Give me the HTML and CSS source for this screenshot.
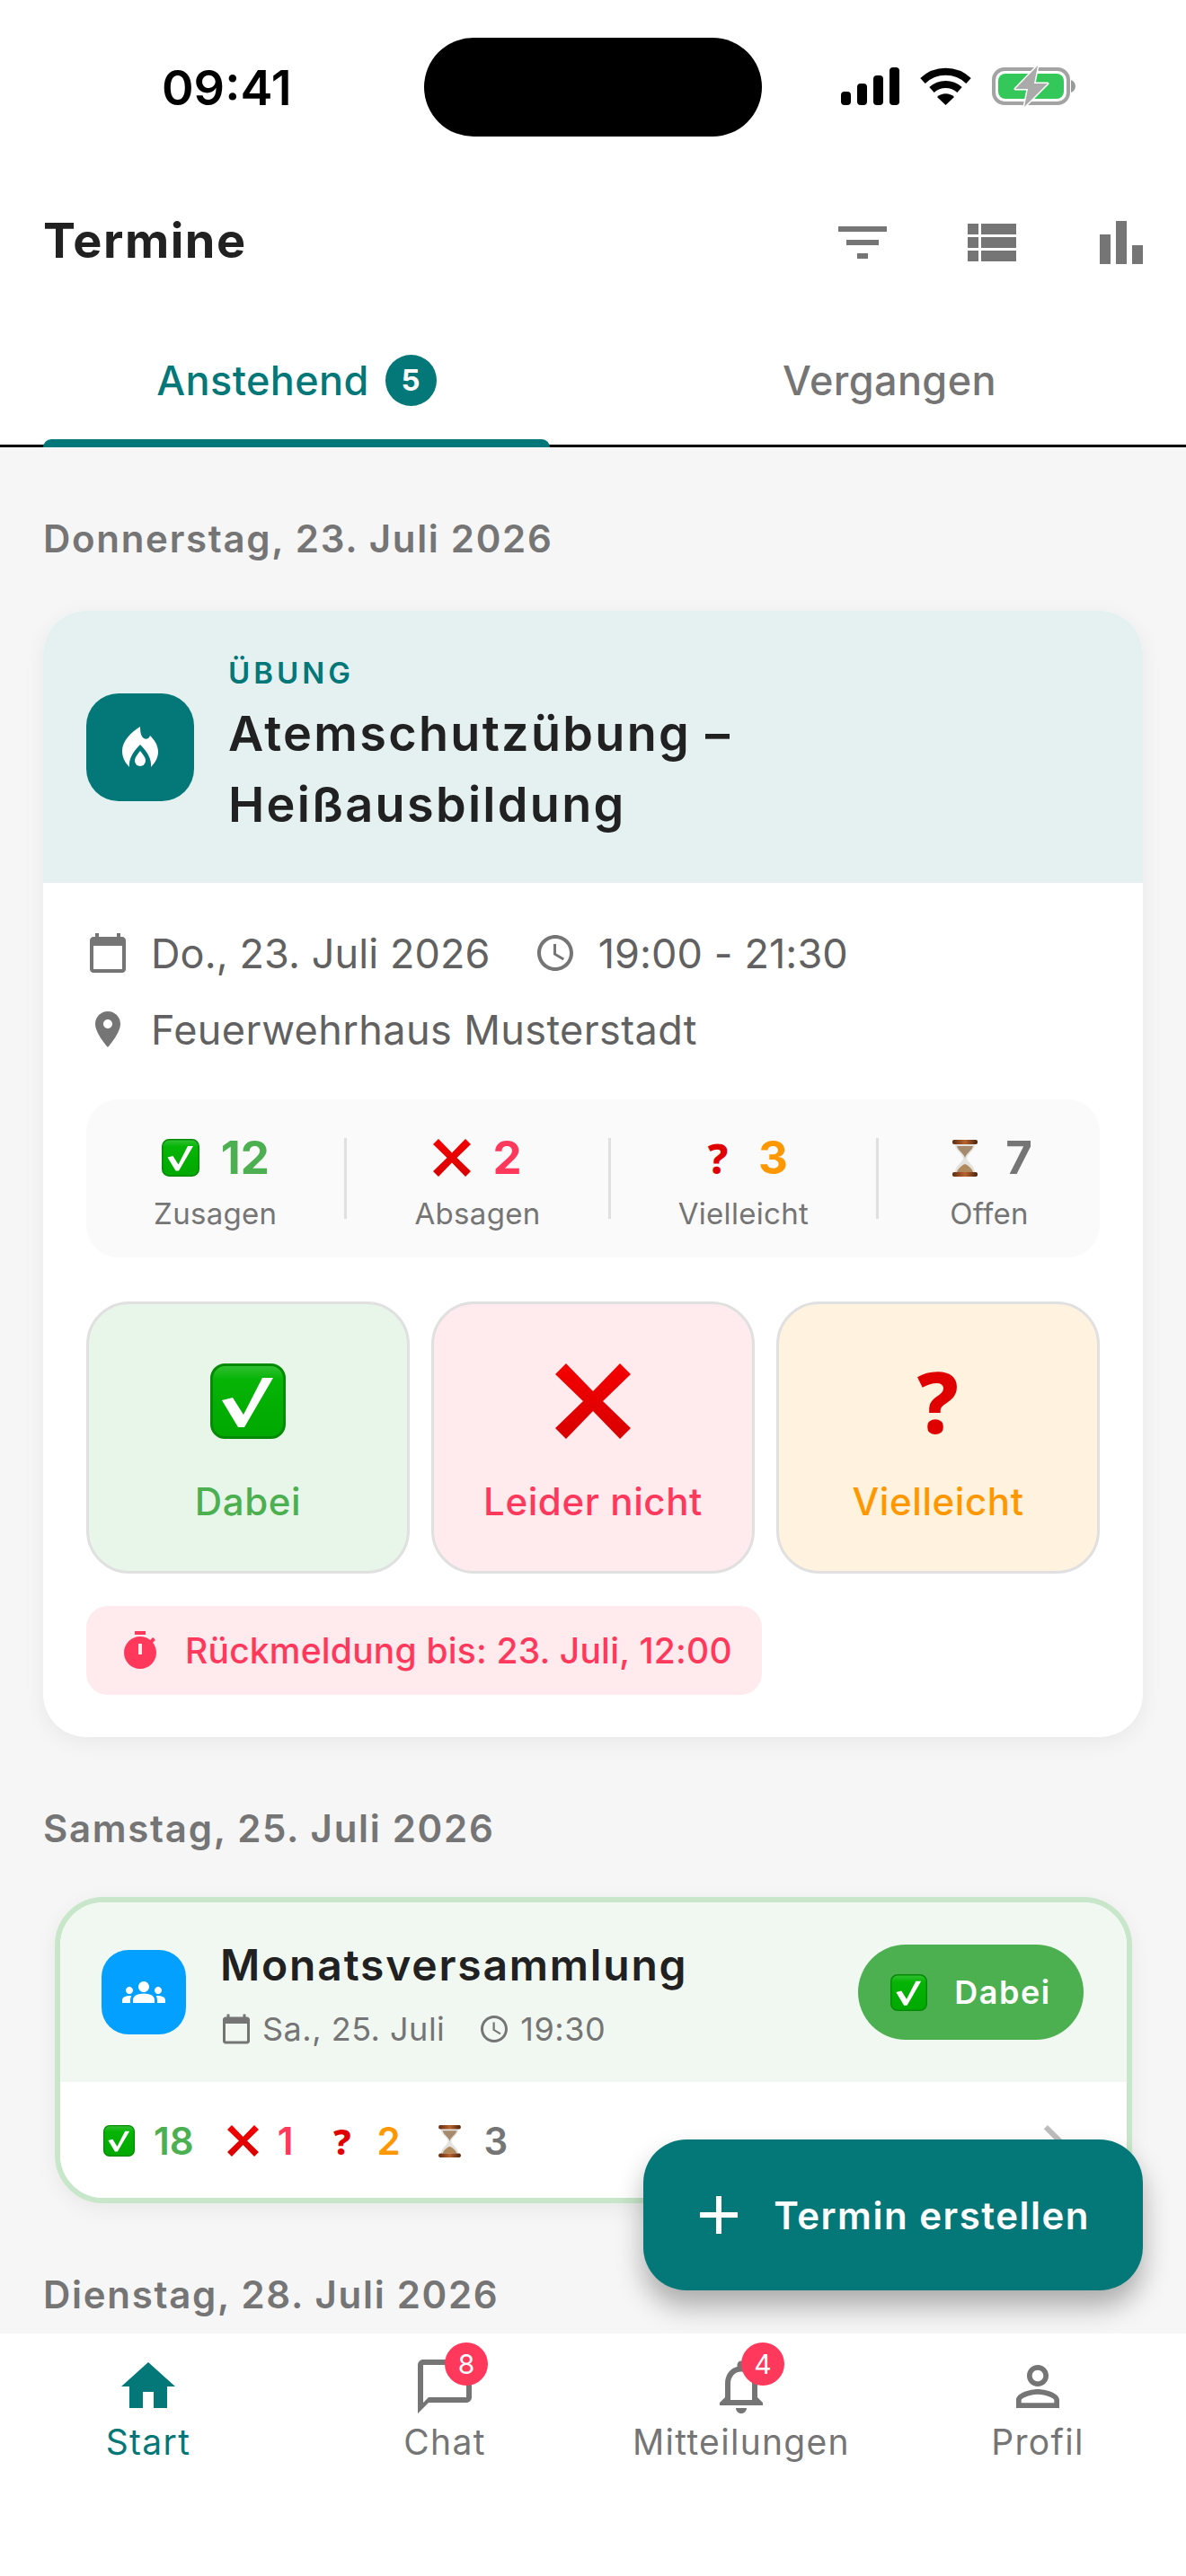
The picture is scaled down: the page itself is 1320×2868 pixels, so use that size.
FILE: index.html
```html
<!DOCTYPE html>
<html lang="de">

<head>
    <meta charset="UTF-8">
    <meta name="viewport" content="width=device-width, initial-scale=1.0">
    <title>Termine</title>
    <link rel="stylesheet" href="styles.css">
</head>

<body>

    <!-- emoji and shared icons -->
    <svg class="defs" aria-hidden="true">
        <defs>
            <linearGradient id="checkFill" x1="0" y1="0" x2="0" y2="1">
                <stop offset="0" stop-color="#35c035" />
                <stop offset="0.2" stop-color="#06b406" />
                <stop offset="1" stop-color="#00a800" />
            </linearGradient>
            <linearGradient id="crossFill" x1="0" y1="0" x2="0" y2="1">
                <stop offset="0" stop-color="#f50000" />
                <stop offset="1" stop-color="#d80000" />
            </linearGradient>
            <linearGradient id="woodFill" x1="0" y1="0" x2="1" y2="0">
                <stop offset="0" stop-color="#5e2c12" />
                <stop offset="0.5" stop-color="#b9642e" />
                <stop offset="1" stop-color="#4c220d" />
            </linearGradient>
        </defs>
        <symbol id="e-check" viewBox="0 0 84 84">
            <rect x="1.5" y="1.5" width="81" height="81" rx="15" fill="url(#checkFill)" stroke="#058a05" stroke-width="3" />
            <polygon points="13,41 25,38 37,57 58,16 70,16 38,71 31,71" fill="#fff" />
        </symbol>
        <symbol id="e-cross" viewBox="0 0 84 84">
            <polygon points="12,0 42,31 72,0 84,12 53,42 84,72 72,84 42,53 12,84 0,72 31,42 0,12" fill="url(#crossFill)" />
        </symbol>
        <symbol id="e-glass" viewBox="0 0 28 41">
            <path d="M3 5h22c0 7-8 10-9 15.500 1 5.500 9 8 9 15.500H3c0-7.500 8-10 9-15.500C11 15 3 12 3 5z" fill="#e4e2de" />
            <path d="M5 7h18c-1 5-8 8-9 13.500C13 15 6 12 5 7z" fill="#a58a6e" />
            <path d="M14 27c3 1 8 5 9 9H5c1-4 6-8 9-9z" fill="#b08a5c" />
            <rect x="0" y="0" width="28" height="5" rx="2" fill="url(#woodFill)" />
            <rect x="0" y="36" width="28" height="5" rx="2" fill="url(#woodFill)" />
        </symbol>
        <symbol id="i-calendar" viewBox="0 0 24 24">
            <path d="M20 3h-1V1h-2v2H7V1H5v2H4c-1.100 0-2 .9-2 2v16c0 1.100.9 2 2 2h16c1.100 0 2-.9 2-2V5c0-1.100-.9-2-2-2zm0 18H4V8h16v13z" />
        </symbol>
        <symbol id="i-clock" viewBox="0 0 24 24">
            <path d="M11.990 2C6.470 2 2 6.480 2 12s4.470 10 9.990 10C17.520 22 22 17.520 22 12S17.520 2 11.990 2zM12 20c-4.420 0-8-3.580-8-8s3.580-8 8-8 8 3.580 8 8-3.580 8-8 8zm.5-13H11v6l5.250 3.150.75-1.230-4.500-2.670z" />
        </symbol>
    </svg>

    <div class="app">

        <div class="status">
            <span class="time">09:41</span>
            <div class="island"></div>
            <div class="status-icons">
                <svg class="signal" width="65" height="42" viewBox="0 0 65 42">
                    <rect x="0" y="27" width="11" height="15" rx="4" />
                    <rect x="18" y="18" width="11" height="24" rx="4" />
                    <rect x="36" y="9" width="11" height="33" rx="4" />
                    <rect x="54" y="0" width="11" height="42" rx="4" />
                </svg>
                <svg width="57" height="42" viewBox="0 0 57 42">
                    <path d="M3 15A37 37 0 0 1 54 15" fill="none" stroke="#000" stroke-width="8" />
                    <path d="M13 25A23 23 0 0 1 44 25" fill="none" stroke="#000" stroke-width="8" />
                    <path d="M19 33A14 14 0 0 1 38 33L28.500 42z" />
                </svg>
                <svg width="94" height="48" viewBox="0 0 94 48">
                    <rect x="2" y="5" width="83" height="38" rx="12" fill="none" stroke="#a3a3a3" stroke-width="4" />
                    <rect x="7" y="10" width="73" height="28" rx="8" fill="#34c759" />
                    <path d="M88 17c3 1 5 4 5 7s-2 6-5 7z" fill="#9a9a9a" />
                    <polygon points="51,1 26,27 40,27 36,47 62,21 47,21" fill="#aaa" stroke="#fff" stroke-width="3" stroke-linejoin="round" paint-order="stroke" />
                </svg>
            </div>
        </div>

        <header class="appbar">
            <h1>Termine</h1>
            <div class="appbar-icons">
                <svg class="icon-72" viewBox="0 0 24 24"><path d="M10 18h4v-2h-4v2zM3 6v2h18V6H3zm3 7h12v-2H6v2z" /></svg>
                <svg class="icon-72" viewBox="0 0 24 24"><path d="M3 9h4V5H3v4zm0 5h4v-4H3v4zm0 5h4v-4H3v4zm5 0h13v-4H8v4zm0-5h13v-4H8v4zM8 5v4h13V5H8z" /></svg>
                <svg class="icon-72" viewBox="0 0 24 24"><path d="M4 9h4v11H4zm6-5h4v16h-4zm6 9h4v7h-4z" /></svg>
            </div>
        </header>

        <nav class="tabs">
            <div class="tab active">Anstehend <span class="tab-badge">5</span></div>
            <div class="tab">Vergangen</div>
        </nav>

        <main class="content">

            <h2 class="day first">Donnerstag, 23. Juli 2026</h2>

            <section class="card">
                <div class="card-head">
                    <div class="type-icon">
                        <svg width="40" height="45" viewBox="0 0 40 45">
                            <path d="M20 0C10 6 0 16 0 27c0 7 3 13 8 18-1-9 4-17 12-25 8 8 13 16 12 25 5-5 8-11 8-17 0-8-5-14-9-18-1 3-4 5-7 3-3-2-4-7-4-13z" fill="#fff" />
                            <path d="M20 27c4 5 6 8 6 11a6 6 0 0 1-12 0c0-3 2-6 6-11z" fill="#fff" />
                        </svg>
                    </div>
                    <div>
                        <div class="type-label">ÜBUNG</div>
                        <div class="card-title">Atemschutzübung –<br>Heißausbildung</div>
                    </div>
                </div>
                <div class="card-body">
                    <div class="meta">
                        <svg class="icon-48"><use href="#i-calendar" /></svg>
                        <span>Do., 23. Juli 2026</span>
                        <svg class="icon-48 meta-gap"><use href="#i-clock" /></svg>
                        <span>19:00 - 21:30</span>
                    </div>
                    <div class="meta meta-place">
                        <svg class="icon-48" viewBox="0 0 24 24"><path d="M12 2C8.130 2 5 5.130 5 9c0 5.250 7 13 7 13s7-7.750 7-13c0-3.870-3.130-7-7-7zm0 9.500c-1.380 0-2.500-1.120-2.500-2.500s1.120-2.500 2.500-2.500 2.500 1.120 2.500 2.500-1.120 2.500-2.500 2.500z" /></svg>
                        <span>Feuerwehrhaus Musterstadt</span>
                    </div>

                    <div class="stats">
                        <div class="stat">
                            <div class="stat-top">
                                <svg class="emoji-42"><use href="#e-check" /></svg>
                                <span class="num green">12</span>
                            </div>
                            <div class="stat-label">Zusagen</div>
                        </div>
                        <div class="stat">
                            <div class="stat-top">
                                <svg class="emoji-42"><use href="#e-cross" /></svg>
                                <span class="num red">2</span>
                            </div>
                            <div class="stat-label">Absagen</div>
                        </div>
                        <div class="stat">
                            <div class="stat-top">
                                <span class="quest quest-42">?</span>
                                <span class="num orange">3</span>
                            </div>
                            <div class="stat-label">Vielleicht</div>
                        </div>
                        <div class="stat">
                            <div class="stat-top">
                                <svg class="glass-42"><use href="#e-glass" /></svg>
                                <span class="num grey">7</span>
                            </div>
                            <div class="stat-label">Offen</div>
                        </div>
                    </div>

                    <div class="answers">
                        <div class="answer answer-yes">
                            <svg class="emoji-84"><use href="#e-check" /></svg>
                            <span>Dabei</span>
                        </div>
                        <div class="answer answer-no">
                            <svg class="emoji-84"><use href="#e-cross" /></svg>
                            <span>Leider nicht</span>
                        </div>
                        <div class="answer answer-maybe">
                            <span class="quest quest-84">?</span>
                            <span>Vielleicht</span>
                        </div>
                    </div>

                    <div class="deadline">
                        <svg width="48" height="48" viewBox="0 0 24 24"><path fill-rule="evenodd" d="M15 1H9v2h6V1zm-4 13h2V8h-2v6zm8.030-6.610l1.420-1.420c-.43-.51-.9-.99-1.410-1.410l-1.420 1.420C16.070 4.740 14.120 4 12 4c-4.970 0-9 4.030-9 9s4.020 9 9 9 9-4.030 9-9c0-2.120-.74-4.070-1.970-5.610z" /></svg>
                        <span>Rückmeldung bis: 23. Juli, 12:00</span>
                    </div>
                </div>
            </section>

            <h2 class="day">Samstag, 25. Juli 2026</h2>

            <section class="card-small">
                <div class="small-head">
                    <div class="small-icon">
                        <svg width="48" height="48" viewBox="0 0 24 24"><path d="M12 12.750c1.630 0 3.070.39 4.240.9 1.080.48 1.760 1.560 1.760 2.730V18H6v-1.610c0-1.180.68-2.260 1.760-2.730 1.170-.52 2.610-.91 4.240-.91zM4 13c1.100 0 2-.9 2-2s-.9-2-2-2-2 .9-2 2 .9 2 2 2zm1.130 1.100c-.37-.06-.74-.1-1.130-.1-.99 0-1.930.21-2.780.58C.48 14.900 0 15.620 0 16.430V18h4.500v-1.610c0-.83.23-1.610.63-2.290zM20 13c1.100 0 2-.9 2-2s-.9-2-2-2-2 .9-2 2 .9 2 2 2zm4 3.430c0-.81-.48-1.530-1.220-1.850-.85-.37-1.790-.58-2.780-.58-.39 0-.76.04-1.130.1.4.68.63 1.460.63 2.290V18H24v-1.570zM12 12c1.660 0 3-1.340 3-3s-1.340-3-3-3-3 1.340-3 3 1.340 3 3 3z" /></svg>
                    </div>
                    <div class="small-text">
                        <div class="small-title">Monatsversammlung</div>
                        <div class="small-meta">
                            <svg class="icon-36"><use href="#i-calendar" /></svg>
                            <span>Sa., 25. Juli</span>
                            <svg class="icon-36 small-gap"><use href="#i-clock" /></svg>
                            <span>19:30</span>
                        </div>
                    </div>
                    <div class="pill">
                        <svg class="emoji-41"><use href="#e-check" /></svg>
                        <span>Dabei</span>
                    </div>
                </div>
                <div class="small-foot">
                    <svg class="emoji-35"><use href="#e-check" /></svg>
                    <span class="count green">18</span>
                    <svg class="emoji-35"><use href="#e-cross" /></svg>
                    <span class="count red">1</span>
                    <span class="quest quest-35">?</span>
                    <span class="count orange">2</span>
                    <svg class="glass-35"><use href="#e-glass" /></svg>
                    <span class="count grey">3</span>
                    <svg class="chevron" viewBox="0 0 24 24"><path d="M10 6L8.590 7.410 13.170 12l-4.580 4.590L10 18l6-6z" /></svg>
                </div>
            </section>

            <h2 class="day">Dienstag, 28. Juli 2026</h2>

        </main>

        <div class="fab">
            <svg class="fab-plus" viewBox="0 0 24 24"><path d="M19 13h-6v6h-2v-6H5v-2h6V5h2v6h6v2z" /></svg>
            <span>Termin erstellen</span>
        </div>

        <footer class="bottom-nav">
            <div class="nav-item active">
                <div class="nav-icon">
                    <svg class="icon-72" viewBox="0 0 24 24"><path d="M10 20v-6h4v6h5v-8h3L12 3 2 12h3v8z" /></svg>
                </div>
                <span>Start</span>
            </div>
            <div class="nav-item">
                <div class="nav-icon">
                    <svg class="icon-72" viewBox="0 0 24 24"><path d="M20 2H4c-1.100 0-2 .9-2 2v18l4-4h14c1.100 0 2-.9 2-2V4c0-1.100-.9-2-2-2zm0 14H6l-2 2V4h16v12z" /></svg>
                    <span class="nav-badge">8</span>
                </div>
                <span>Chat</span>
            </div>
            <div class="nav-item">
                <div class="nav-icon">
                    <svg class="icon-72" viewBox="0 0 24 24"><path d="M12 22c1.100 0 2-.9 2-2h-4c0 1.100.89 2 2 2zm6-6v-5c0-3.070-1.640-5.640-4.500-6.320V4c0-.83-.67-1.500-1.500-1.500s-1.500.67-1.500 1.500v.68C7.630 5.360 6 7.920 6 11v5l-2 2v1h16v-1l-2-2zm-2 1H8v-6c0-2.480 1.510-4.500 4-4.500s4 2.020 4 4.500v6z" /></svg>
                    <span class="nav-badge">4</span>
                </div>
                <span>Mitteilungen</span>
            </div>
            <div class="nav-item">
                <div class="nav-icon">
                    <svg class="icon-72" viewBox="0 0 24 24"><path d="M12 5.900c1.160 0 2.100.94 2.100 2.100s-.94 2.100-2.100 2.100S9.900 9.160 9.900 8s.94-2.100 2.100-2.100m0 9c2.970 0 6.100 1.460 6.100 2.100v1.100H5.900V17c0-.64 3.130-2.100 6.100-2.100M12 4C9.790 4 8 5.790 8 8s1.790 4 4 4 4-1.790 4-4-1.790-4-4-4zm0 9c-2.670 0-8 1.340-8 4v3h16v-3c0-2.660-5.330-4-8-4z" /></svg>
                </div>
                <span>Profil</span>
            </div>
        </footer>

    </div>

</body>

</html>
```

FILE: styles.css
```css
* {
    box-sizing: border-box;
}

body {
    margin: 0;
    font-family: Inter, "Noto Sans", sans-serif;
    color: #212121;
    background: #fff;
}

.defs {
    position: absolute;
    width: 0;
    height: 0;
}

.app {
    position: relative;
    width: 1320px;
    height: 2868px;
    overflow: hidden;
    display: flex;
    flex-direction: column;
    background: #fff;
}

/* status bar */
.status {
    height: 190px;
    flex: none;
    position: relative;
    display: flex;
    align-items: flex-start;
    justify-content: space-between;
    padding: 72px 122px 0 180px;
}

.time {
    font-size: 54px;
    font-weight: 600;
    line-height: 52px;
    color: #000;
}

.island {
    position: absolute;
    left: 472px;
    top: 42px;
    width: 376px;
    height: 110px;
    border-radius: 55px;
    background: #000;
}

.status-icons {
    display: flex;
    align-items: center;
    gap: 23px;
}

/* app bar */
.appbar {
    height: 156px;
    flex: none;
    display: flex;
    align-items: flex-start;
    justify-content: space-between;
    padding: 44px 36px 0 48px;
}

.appbar h1 {
    margin: 0;
    font-size: 54px;
    font-weight: 700;
    line-height: 68px;
    letter-spacing: 1.5px;
    color: #212121;
}

.appbar-icons {
    display: flex;
    gap: 72px;
    fill: #757575;
}

.icon-72 {
    width: 72px;
    height: 72px;
    display: block;
}

/* tabs */
.tabs {
    height: 152px;
    flex: none;
    display: flex;
    border-bottom: 3px solid #000;
}

.tab {
    position: relative;
    flex: 1;
    display: flex;
    align-items: center;
    justify-content: center;
    gap: 18px;
    padding-top: 5px;
    font-size: 45px;
    font-weight: 500;
    letter-spacing: 0.4px;
    color: #757575;
}

.tab.active {
    color: #047878;
}

.tab.active::after {
    content: "";
    position: absolute;
    left: 48px;
    right: 48px;
    bottom: -3px;
    height: 9px;
    border-radius: 9px 9px 0 0;
    background: #047878;
}

.tab-badge {
    width: 57px;
    height: 57px;
    border-radius: 50%;
    background: #047878;
    color: #fff;
    font-size: 33px;
    font-weight: 700;
    display: flex;
    align-items: center;
    justify-content: center;
}

/* list */
.content {
    flex: 1;
    min-height: 0;
    overflow: hidden;
    padding: 0 48px;
    background: #f6f6f6;
}

.day {
    margin: 72px 0 46px;
    font-size: 42px;
    font-weight: 600;
    line-height: 60px;
    letter-spacing: 1.7px;
    color: #757575;
}

.day.first {
    margin-bottom: 50px;
}

.card {
    border-radius: 48px;
    overflow: hidden;
    background: #fff;
    box-shadow: 0 6px 24px rgba(0, 0, 0, 0.06);
}

.card-head {
    height: 303px;
    display: flex;
    align-items: center;
    gap: 38px;
    padding: 0 48px;
    background: #e5f1f1;
}

.type-icon {
    width: 120px;
    height: 120px;
    flex: none;
    border-radius: 36px;
    background: #047878;
    display: flex;
    align-items: center;
    justify-content: center;
}

.type-label {
    font-size: 33px;
    font-weight: 600;
    letter-spacing: 4px;
    line-height: 40px;
    color: #047878;
}

.card-title {
    margin-top: 8px;
    font-size: 54px;
    font-weight: 600;
    line-height: 79px;
    letter-spacing: 2.300px;
    color: #212121;
}

.card-body {
    padding: 47px 48px 47px;
}

.meta {
    display: flex;
    align-items: center;
    height: 62px;
    font-size: 45px;
    letter-spacing: 0.1px;
    color: #616161;
    fill: #757575;
}

.meta svg {
    flex: none;
    margin-right: 24px;
}

.meta .meta-gap {
    margin-left: 48px;
}

.meta-place {
    margin-top: 23px;
    letter-spacing: 0.4px;
}

.icon-48 {
    width: 48px;
    height: 48px;
    display: block;
}

.stats {
    margin-top: 47px;
    height: 176px;
    padding: 43px 0;
    display: flex;
    border-radius: 36px;
    background: #fafafa;
}

.stat {
    flex: 1 1 auto;
    display: flex;
    flex-direction: column;
    align-items: center;
    border-right: 3px solid #e0e0e0;
}

.stat:last-child {
    border-right: none;
}

.stat-top {
    display: flex;
    align-items: center;
    gap: 24px;
    height: 44px;
}

.stat-label {
    margin-top: 20px;
    font-size: 33px;
    line-height: 40px;
    letter-spacing: 0.3px;
    color: #757575;
}

.num {
    font-size: 51px;
    font-weight: 700;
    line-height: 44px;
}

.green {
    color: #4caf50;
}

.red {
    color: #ff385c;
}

.orange {
    color: #ff9800;
}

.grey {
    color: #757575;
}

.emoji-42 {
    width: 42px;
    height: 42px;
    display: block;
}

.emoji-84 {
    width: 84px;
    height: 84px;
    display: block;
}

.emoji-41 {
    width: 41px;
    height: 41px;
    display: block;
    flex: none;
}

.emoji-35 {
    width: 35px;
    height: 35px;
    display: block;
    flex: none;
}

.glass-42 {
    width: 42px;
    height: 41px;
    display: block;
}

.glass-35 {
    width: 35px;
    height: 36px;
    display: block;
    flex: none;
}

.quest {
    font-family: "Noto Sans", sans-serif;
    font-weight: 800;
    color: #e10000;
    text-align: center;
}

.quest-42 {
    width: 42px;
    font-size: 46px;
    line-height: 44px;
}

.quest-84 {
    width: 84px;
    height: 84px;
    font-size: 94px;
    line-height: 84px;
}

.quest-35 {
    width: 35px;
    flex: none;
    font-size: 40px;
    line-height: 40px;
}

.answers {
    margin-top: 49px;
    display: grid;
    grid-template-columns: repeat(3, 1fr);
    gap: 24px;
}

.answer {
    height: 303px;
    border: 3px solid #e0e0e0;
    border-radius: 48px;
    display: flex;
    flex-direction: column;
    align-items: center;
    padding-top: 66px;
    gap: 43px;
    font-size: 42px;
    font-weight: 500;
    line-height: 54px;
    letter-spacing: 0.6px;
}

.answer-yes {
    background: #e8f5e9;
    color: #4caf50;
}

.answer-no {
    background: #ffebee;
    color: #ff385c;
}

.answer-maybe {
    background: #fff3e0;
    color: #ff9800;
}

.deadline {
    margin-top: 36px;
    width: 752px;
    height: 99px;
    padding-left: 36px;
    display: flex;
    align-items: center;
    gap: 26px;
    border-radius: 24px;
    background: #ffebee;
    font-size: 39px;
    font-weight: 500;
    letter-spacing: 0.2px;
    color: #ff385c;
    fill: #ff385c;
}

/* small card */
.card-small {
    margin: 0 12px 0 13px;
    border: 6px solid #c8e6c9;
    border-radius: 54px;
    overflow: hidden;
    background: #fff;
    box-shadow: 0 6px 24px rgba(0, 0, 0, 0.06);
}

.small-head {
    height: 200px;
    display: flex;
    align-items: center;
    padding: 0 48px 0 46px;
    background: #f1f8f2;
}

.small-icon {
    width: 94px;
    height: 94px;
    flex: none;
    border-radius: 30px;
    background: #03a0ff;
    fill: #fff;
    display: flex;
    align-items: center;
    justify-content: center;
}

.small-text {
    flex: 1;
    margin-left: 38px;
}

.small-title {
    margin-top: 2px;
    font-size: 48px;
    font-weight: 600;
    line-height: 58px;
    letter-spacing: 1.8px;
    color: #212121;
}

.small-meta {
    margin-top: 22px;
    display: flex;
    align-items: center;
    gap: 11px;
    font-size: 36px;
    line-height: 40px;
    letter-spacing: 0.5px;
    color: #757575;
    fill: #757575;
}

.icon-36 {
    width: 36px;
    height: 36px;
    display: block;
    flex: none;
}

.small-gap {
    margin-left: 26px;
}

.pill {
    width: 251px;
    height: 106px;
    flex: none;
    border-radius: 53px;
    background: #4caf50;
    color: #fff;
    display: flex;
    align-items: center;
    justify-content: center;
    gap: 30px;
    font-size: 36px;
    font-weight: 600;
    letter-spacing: 1.5px;
}

.small-foot {
    height: 129px;
    display: flex;
    align-items: center;
    padding: 2px 0 0 48px;
    background: #fff;
}

.count {
    margin: 0 37px 0 21px;
    font-size: 42px;
    font-weight: 600;
}

.chevron {
    width: 72px;
    height: 72px;
    margin-left: auto;
    margin-right: 46px;
    fill: #bdbdbd;
}

/* floating button */
.fab {
    position: absolute;
    right: 48px;
    top: 2382px;
    height: 168px;
    padding: 0 59px 0 48px;
    display: flex;
    align-items: center;
    gap: 25px;
    border-radius: 48px;
    background: #047878;
    color: #fff;
    font-size: 42px;
    font-weight: 600;
    letter-spacing: 1.5px;
    box-shadow: 0 18px 30px rgba(0, 0, 0, 0.3);
}

.fab-plus {
    width: 72px;
    height: 72px;
    fill: #fff;
}

/* bottom navigation */
.bottom-nav {
    height: 270px;
    flex: none;
    display: grid;
    grid-template-columns: repeat(4, 1fr);
    padding-top: 23px;
    background: #fff;
}

.nav-item {
    display: flex;
    flex-direction: column;
    align-items: center;
    font-size: 39px;
    line-height: 50px;
    letter-spacing: 1.3px;
    color: #757575;
    fill: #757575;
}

.nav-item.active {
    color: #047878;
    fill: #047878;
}

.nav-icon {
    position: relative;
    width: 72px;
    height: 72px;
    margin-bottom: 1px;
}

.nav-badge {
    position: absolute;
    left: 36px;
    top: -13px;
    width: 48px;
    height: 48px;
    border-radius: 50%;
    background: #ff385c;
    color: #fff;
    font-size: 30px;
    line-height: 48px;
    letter-spacing: 0;
    text-align: center;
}
```
